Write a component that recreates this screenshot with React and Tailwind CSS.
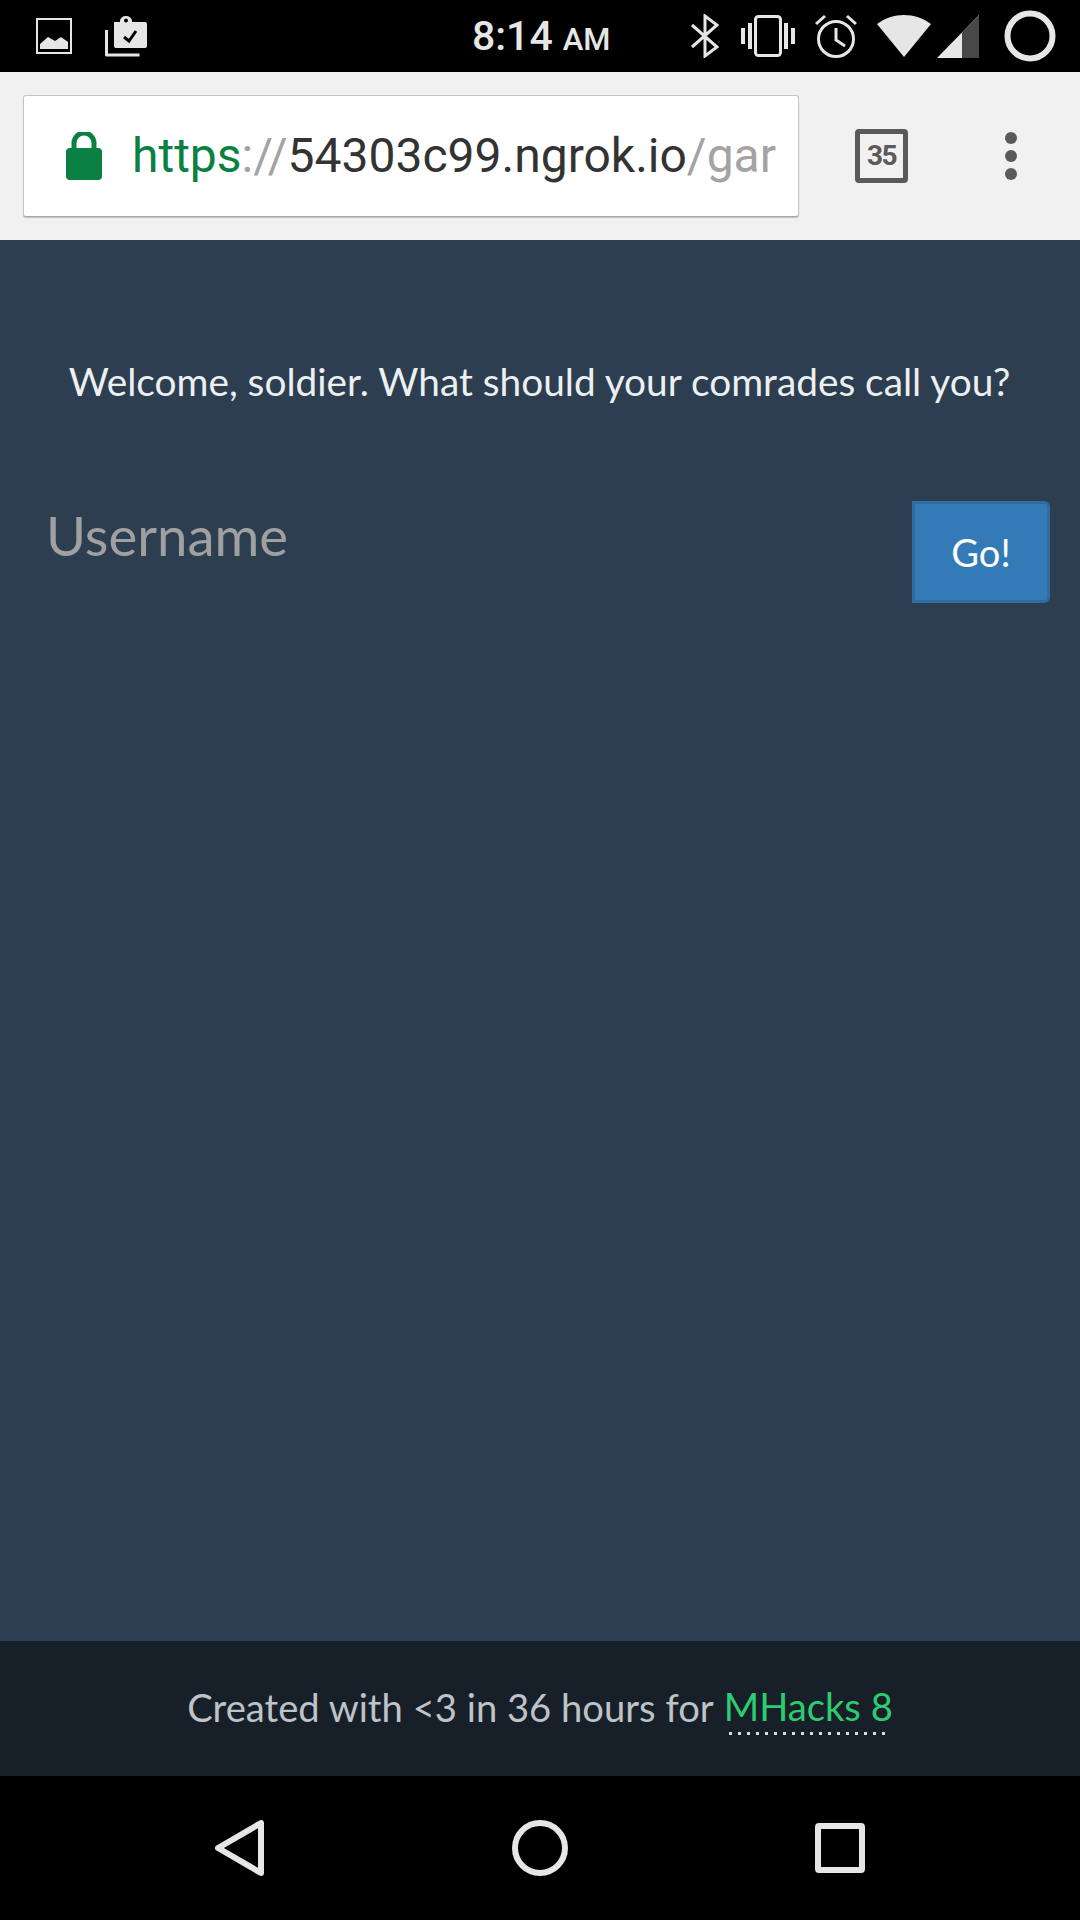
const handlee = { fontFamily: '"Lato", "Open Sans", sans-serif' };

function StatusBar() {
  return (
    <div className="flex h-[72px] items-center bg-black text-[#e6e6e6]">
      <div className="flex w-[472px] items-center gap-[33px] pl-[36px]">
        {/* gallery */}
        <svg width="36" height="36" viewBox="0 0 36 36">
          <rect x="1" y="1" width="34" height="34" fill="none" stroke="currentColor" strokeWidth="2" />
          <path d="M4 31v-5l8-7 7 4 6-4 7 5v7z" fill="currentColor" />
        </svg>
        {/* clipboard */}
        <svg width="42" height="41" viewBox="0 0 42 41">
          <path d="M1.5 14v25h33" fill="none" stroke="currentColor" strokeWidth="3" strokeLinejoin="round" />
          <path d="M9 6h6V5a6 5 0 0 1 12 0v1h13a2 2 0 0 1 2 2v22a2 2 0 0 1-2 2H11a2 2 0 0 1-2-2z" fill="currentColor" />
          <circle cx="21" cy="4.5" r="2" fill="#000" />
          <path d="M19 21l5 4 7-10" fill="none" stroke="#000" strokeWidth="3" />
        </svg>
      </div>
      <div className="flex w-[219px] items-baseline font-['Roboto'] font-medium">
        <span className="text-[41px] leading-none">8:14</span>
        <span className="ml-[10px] text-[31px] leading-none">AM</span>
      </div>
      <div className="flex items-center">
        {/* bluetooth */}
        <svg width="28" height="44" viewBox="0 0 28 44" fill="none" stroke="currentColor" strokeWidth="3">
          <path d="M1 11l25 22-12 9V2l12 9L1 33" />
        </svg>
        {/* vibrate */}
        <svg width="54" height="42" viewBox="0 0 54 42" className="ml-[22px]" fill="currentColor">
          <rect x="14.5" y="1.5" width="25" height="39" rx="3" fill="none" stroke="currentColor" strokeWidth="3" />
          <rect x="0" y="13" width="4" height="16" />
          <rect x="7" y="8" width="4" height="26" />
          <rect x="43" y="8" width="4" height="26" />
          <rect x="50" y="13" width="4" height="16" />
        </svg>
        {/* alarm */}
        <svg width="42" height="44" viewBox="0 0 42 44" className="ml-[20px]" fill="none" stroke="currentColor" strokeWidth="3">
          <circle cx="21" cy="25" r="17.5" />
          <path d="M21 14v12l9 6" />
          <path d="M1 10l9-8M41 10l-9-8" />
        </svg>
        {/* wifi */}
        <svg width="54" height="44" viewBox="0 0 54 44" className="ml-[20px]" fill="currentColor">
          <path d="M27 43L0 10C16-2 38-2 54 10z" />
        </svg>
        {/* cell signal */}
        <svg width="42" height="43" viewBox="0 0 42 43" className="ml-[6px]">
          <path d="M0 43L42 0v43z" fill="#e6e6e6" />
          <path d="M25 17.5L42 0v43H25z" fill="#484848" />
        </svg>
        {/* battery circle */}
        <svg width="52" height="52" viewBox="0 0 52 52" className="ml-[25px]" fill="none" stroke="currentColor" strokeWidth="6">
          <circle cx="26" cy="26" r="22.5" />
        </svg>
      </div>
    </div>
  );
}

function Toolbar() {
  return (
    <div className="flex h-[168px] items-center bg-[#f1f1f1] pl-[23px]">
      <div className="flex h-[122px] w-[776px] items-center overflow-hidden rounded-[3px] border border-[#c4c4c4] border-b-[#a8a8a8] bg-white pl-[42px] pr-[10px] shadow-[0_1px_1px_rgba(0,0,0,0.2)]">
        <svg width="36" height="48" viewBox="0 0 36 48" className="shrink-0">
          <path d="M8 18v-7a10 10 0 0 1 20 0v7" fill="none" stroke="#0b8043" strokeWidth="5" />
          <rect x="0" y="16" width="36" height="32" rx="4" fill="#0b8043" />
        </svg>
        <div className="ml-[30px] overflow-hidden whitespace-nowrap font-['Roboto'] text-[48px] leading-[64px]">
          <span className="text-[#0b8043]">https</span>
          <span className="text-[#a3a3a3]">://</span>
          <span className="text-[#333333]">54303c99.ngrok.io</span>
          <span className="text-[#a3a3a3]">/gar</span>
        </div>
      </div>
      <div className="ml-[56px] flex h-[54px] w-[53px] items-center justify-center rounded-[4px] border-[5px] border-[#5a5a5a] font-['Roboto'] text-[28px] font-bold leading-none tracking-[-1.5px] text-[#5a5a5a]">
        35
      </div>
      <div className="ml-[97px] flex flex-col gap-[6px]">
        <span className="h-[12px] w-[12px] rounded-full bg-[#5a5a5a]" />
        <span className="h-[12px] w-[12px] rounded-full bg-[#5a5a5a]" />
        <span className="h-[12px] w-[12px] rounded-full bg-[#5a5a5a]" />
      </div>
    </div>
  );
}

function NavBar() {
  return (
    <div className="flex h-[144px] items-center bg-black text-[#e6e6e6]">
      <svg width="50" height="56" viewBox="0 0 50 56" className="ml-[215px]" fill="none" stroke="currentColor" strokeWidth="6" strokeLinejoin="round">
        <path d="M46 3v50L3 28z" />
      </svg>
      <svg width="56" height="56" viewBox="0 0 56 56" className="ml-[247px]" fill="none" stroke="currentColor" strokeWidth="6">
        <circle cx="28" cy="28" r="25" />
      </svg>
      <svg width="50" height="50" viewBox="0 0 50 50" className="ml-[247px]" fill="none" stroke="currentColor" strokeWidth="6" strokeLinejoin="round">
        <rect x="3" y="3" width="44" height="44" rx="1" />
      </svg>
    </div>
  );
}

export default function App() {
  return (
    <div className="flex h-[1920px] w-[1080px] flex-col overflow-hidden" style={handlee}>
      <StatusBar />
      <Toolbar />

      <main className="flex-1 bg-[#2c3e50] pl-[29px] pr-[30px]">
        <p className="mt-[117px] text-center text-[38.8px] leading-[48px] text-[#ecf0f1]">
          Welcome, soldier. What should your comrades call you?
        </p>
        <div className="mt-[96px] flex items-start justify-between">
          <span className="ml-[17px] mt-[4px] text-[54.5px] leading-[60px] text-[#a0a0a0]">Username</span>
          <button className="flex h-[102px] w-[138px] items-center justify-center rounded-r-[6px] border-[3px] border-[#2e6da4] bg-[#337ab7] text-[38px] text-white">
            Go!
          </button>
        </div>
      </main>

      <footer className="flex h-[135px] items-center justify-center bg-[#171f29] pb-[2px] text-[38.2px] text-[#bdc3c7]">
        <span>Created with &lt;3 in 36 hours for</span>
        <a className="ml-[10px] inline-block bg-[repeating-linear-gradient(90deg,#d8dcdf_0_3px,transparent_3px_9px)] bg-[length:159px_3px] bg-bottom bg-no-repeat pb-[4px] leading-[50px] text-[#2ecc71]">
          MHacks 8
        </a>
      </footer>

      <NavBar />
    </div>
  );
}
